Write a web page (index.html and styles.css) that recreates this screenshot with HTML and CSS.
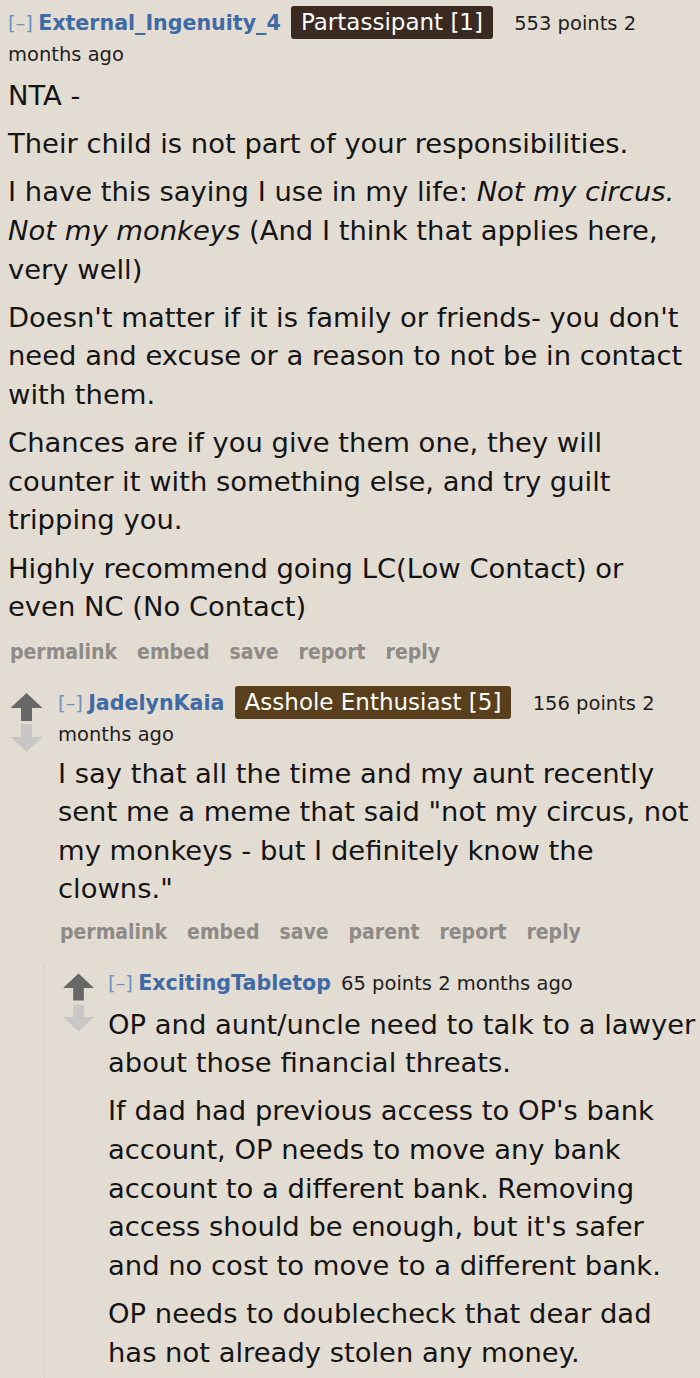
FILE: index.html
```html
<!DOCTYPE html>
<html>
<head>
<meta charset="utf-8">
<link rel="stylesheet" href="styles.css">
</head>
<body>
<div class="comment top">
  <div class="entry">
    <p class="tagline"><span class="expand">[–]</span> <a class="author">External_Ingenuity_4</a> <span class="flair flair-dark">Partassipant [1]</span> <span class="score">553 points</span> 2 months ago</p>
    <div class="md">
      <p>NTA -</p>
      <p>Their child is not part of your responsibilities.</p>
      <p>I have this saying I use in my life: <em>Not my circus. Not my monkeys</em> (And I think that applies here, very well)</p>
      <p>Doesn't matter if it is family or friends- you don't need and excuse or a reason to not be in contact with them.</p>
      <p>Chances are if you give them one, they will counter it with something else, and try guilt tripping you.</p>
      <p>Highly recommend going LC(Low Contact) or even NC (No Contact)</p>
    </div>
    <ul class="buttons"><li>permalink</li><li>embed</li><li>save</li><li>report</li><li>reply</li></ul>
  </div>

  <div class="comment level2">
    <div class="midcol">
      <svg class="arrow up" viewBox="0 0 32 28"><path d="M16 0 L32 15 L21.5 15 L21.5 28 L10.5 28 L10.5 15 L0 15 Z"/></svg>
      <svg class="arrow down" viewBox="0 0 32 28"><path d="M10.5 0 L21.5 0 L21.5 13 L32 13 L16 28 L0 13 L10.5 13 Z"/></svg>
    </div>
    <div class="entry">
      <p class="tagline"><span class="expand">[–]</span> <a class="author">JadelynKaia</a> <span class="flair flair-brown">Asshole Enthusiast [5]</span> <span class="score">156 points</span> 2 months ago</p>
      <div class="md">
        <p>I say that all the time and my aunt recently sent me a meme that said "not my circus, not my monkeys - but I definitely know the clowns."</p>
      </div>
      <ul class="buttons"><li>permalink</li><li>embed</li><li>save</li><li>parent</li><li>report</li><li>reply</li></ul>
    </div>
  </div>

  <div class="child">
    <div class="comment level3">
      <div class="midcol">
        <svg class="arrow up" viewBox="0 0 32 28"><path d="M16 0 L32 15 L21.5 15 L21.5 28 L10.5 28 L10.5 15 L0 15 Z"/></svg>
        <svg class="arrow down" viewBox="0 0 32 28"><path d="M10.5 0 L21.5 0 L21.5 13 L32 13 L16 28 L0 13 L10.5 13 Z"/></svg>
      </div>
      <div class="entry">
        <p class="tagline"><span class="expand">[–]</span> <a class="author">ExcitingTabletop</a> <span class="score">65 points</span> 2 months ago</p>
        <div class="md">
          <p>OP and aunt/uncle need to talk to a lawyer about those financial threats.</p>
          <p>If dad had previous access to OP's bank account, OP needs to move any bank account to a different bank. Removing access should be enough, but it's safer and no cost to move to a different bank.</p>
          <p>OP needs to doublecheck that dear dad has not already stolen any money.</p>
        </div>
      </div>
    </div>
  </div>
</div>
</body>
</html>
```

FILE: styles.css
```css
html, body {
  margin: 0;
  padding: 0;
  background: #e3dcd2;
}
body {
  width: 700px;
  height: 1378px;
  overflow: hidden;
  color: #222;
  font-family: "DejaVu Sans", Verdana, sans-serif;
}
p { margin: 0; }

.entry { flex: 1; min-width: 0; padding-right: 4px; }
.top > .entry { padding: 7px 4px 0 8px; }

.tagline {
  font-family: "DejaVu Sans", sans-serif;
  font-size: 19.5px;
  line-height: 31px;
  color: #1e1e1e;
}
.expand { color: #7090c0; margin-right: -1px; }
.author { color: #3e6aa5; font-weight: bold; font-size: 20.6px; margin-right: 4px; }
.flair {
  color: #fff;
  font-size: 23px;
  line-height: 31px;
  padding: 3px 10px 4px;
  border-radius: 3px;
  margin-right: 15px;
}
.flair-dark { background: #3b2a22; }
.flair-brown { background: #5a3f1c; }

.md {
  font-size: 27.4px;
  line-height: 38.6px;
  color: #141414;
  margin-top: 7px;
}
.md p { margin-bottom: 9.6px; }
.md em { font-style: italic; }

.buttons {
  list-style: none;
  margin: 12px 0 0;
  padding: 0 0 0 2px;
  display: flex;
  gap: 20px;
  font-family: "DejaVu Sans Condensed", "DejaVu Sans", sans-serif;
  font-stretch: condensed;
  font-weight: bold;
  font-size: 21px;
  line-height: 26px;
  color: #8d8a87;
}

.level2, .level3 { display: flex; }
.level2 { margin-top: 22px; padding-left: 10px; }
.level2 .md { margin-top: 5px; }
.level2 .buttons { margin-top: 9px; }
.midcol {
  width: 48px;
  flex: none;
  display: flex;
  flex-direction: column;
  gap: 3px;
  padding-top: 6px;
}
.arrow { width: 33px; height: 28px; display: block; }
.arrow.up { fill: #676767; }
.arrow.down { fill: #c9c7c5; }

.child {
  margin-left: 44px;
  border-left: 1px dotted #cdcad6;
  margin-top: 19px;
  padding-top: 4px;
}
.level3 { padding-left: 18px; }
.level3 .midcol { width: 45px; padding-top: 5px; }
.level3 .arrow { width: 31px; }
```
